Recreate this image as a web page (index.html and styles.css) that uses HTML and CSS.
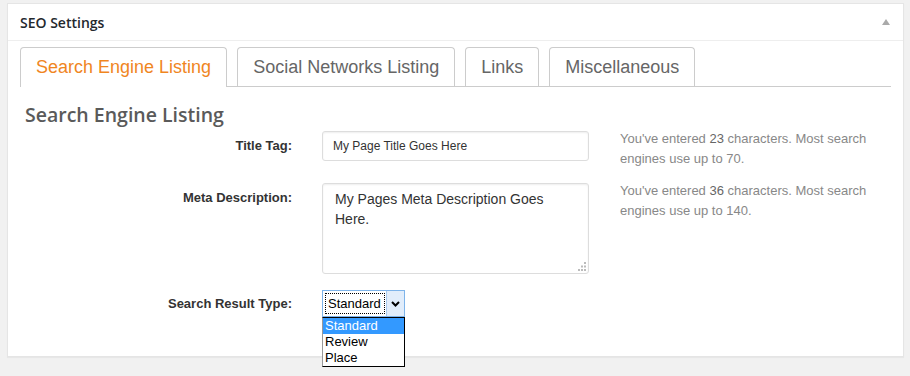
FILE: index.html
```html
<html lang="en">
<head>
  <meta charset="UTF-8">
  <title>SEO Settings</title>
  <link rel="stylesheet" href="styles.css">
</head>
<body>

  <div class="postbox">
    <div class="postbox-header">
      <h2>SEO Settings</h2>
      <span class="toggle"></span>
    </div>

    <div class="inside">
      <!-- Abas -->
      <div class="tabs">
        <div class="tab active">Search Engine Listing</div>
        <div class="tab">Social Networks Listing</div>
        <div class="tab">Links</div>
        <div class="tab">Miscellaneous</div>
      </div>

      <div class="panel">
        <h3>Search Engine Listing</h3>

        <div class="row row-title">
          <label class="label">Title Tag:</label>
          <div class="field">
            <input class="text-input" type="text" value="My Page Title Goes Here">
          </div>
          <p class="help">You've entered <b>23</b> characters. Most search engines use up to 70.</p>
        </div>

        <div class="row row-desc">
          <label class="label">Meta Description:</label>
          <div class="field textarea-wrap">
            <textarea class="text-area">My Pages Meta Description Goes Here.</textarea>
            <svg class="grip" width="10" height="10" viewBox="0 0 10 10">
              <rect x="7" y="0" width="2" height="2" fill="#bbb"/>
              <rect x="4" y="3.5" width="2" height="2" fill="#bbb"/>
              <rect x="7" y="3.5" width="2" height="2" fill="#bbb"/>
              <rect x="1" y="7" width="2" height="2" fill="#bbb"/>
              <rect x="4" y="7" width="2" height="2" fill="#bbb"/>
              <rect x="7" y="7" width="2" height="2" fill="#bbb"/>
            </svg>
          </div>
          <p class="help">You've entered <b>36</b> characters. Most search engines use up to 140.</p>
        </div>

        <div class="row row-type">
          <label class="label">Search Result Type:</label>
          <div class="field">
            <div class="select">
              <div class="select-value"><span>Standard</span></div>
              <div class="select-arrow">
                <svg width="9" height="6" viewBox="0 0 9 6">
                  <path d="M1 1 L4.5 4.5 L8 1" fill="none" stroke="#000" stroke-width="2"/>
                </svg>
              </div>
              <!-- lista aberta -->
              <ul class="select-list">
                <li class="selected">Standard</li>
                <li>Review</li>
                <li>Place</li>
              </ul>
            </div>
          </div>
        </div>
      </div>
    </div>
  </div>

</body>
</html>
```

FILE: styles.css
```css
body {
  margin: 0;
  background: #f1f1f1;
  font-family: 'Liberation Sans', Arial, sans-serif;
  color: #444;
}

.postbox {
  margin: 3px 0 0 7px;
  width: 895px;
  height: 352px;
  background: #fff;
  border: 1px solid #e5e5e5;
  box-shadow: 0 1px 1px rgba(0, 0, 0, 0.04);
}

.postbox-header {
  height: 36px;
  border-bottom: 1px solid #eee;
  display: flex;
  align-items: center;
  justify-content: space-between;
  padding: 0 13px 0 12px;
}

.postbox-header h2 {
  margin: 0;
  font-family: 'Open Sans', sans-serif;
  font-size: 14px;
  font-weight: 600;
  color: #23282d;
}

.toggle {
  width: 0;
  height: 0;
  border-left: 4px solid transparent;
  border-right: 4px solid transparent;
  border-bottom: 6px solid #aaa;
  margin-top: -1px;
}

.inside {
  padding: 6px 12px 0 12px;
}

/* Abas */
.tabs {
  display: flex;
  border-bottom: 1px solid #ccc;
  height: 39px;
}

.tab {
  height: 38px;
  padding: 0 15px;
  margin-right: 10px;
  border: 1px solid #ccc;
  border-bottom: none;
  border-radius: 4px 4px 0 0;
  font-size: 18px;
  line-height: 38px;
  color: #666;
  background: #fff;
}

.tab.active {
  color: #f0861f;
  height: 39px;
  margin-bottom: -1px;
}

.panel {
  padding: 0 0 0 5px;
}

.panel h3 {
  margin: 16px 0 4px 0;
  font-family: 'Open Sans', sans-serif;
  font-size: 19.5px;
  font-weight: 600;
  color: #5a5a5a;
  line-height: 24px;
}

.row {
  display: flex;
  align-items: flex-start;
}

.row-desc {
  margin-top: 14px;
}

.row-type {
  margin-top: 16px;
}

.label {
  width: 267px;
  text-align: right;
  padding-top: 6px;
  font-family: 'Liberation Sans', Arial, sans-serif;
  font-size: 13px;
  font-weight: bold;
  line-height: 18px;
  color: #333;
}

.row-type .label {
  padding-top: 5px;
}

.field {
  margin-left: 30px;
  width: 267px;
}

.text-input {
  box-sizing: border-box;
  width: 267px;
  height: 30px;
  border: 1px solid #ddd;
  border-radius: 3px;
  box-shadow: inset 0 1px 2px rgba(0, 0, 0, 0.07);
  padding: 0 10px;
  font-family: 'Liberation Sans', Arial, sans-serif;
  font-size: 12px;
  color: #333;
}

.textarea-wrap {
  position: relative;
  height: 91px;
}

.text-area {
  box-sizing: border-box;
  width: 267px;
  height: 91px;
  border: 1px solid #ddd;
  border-radius: 3px;
  box-shadow: inset 0 1px 2px rgba(0, 0, 0, 0.07);
  padding: 5px 12px;
  font-family: 'Liberation Sans', Arial, sans-serif;
  font-size: 14px;
  line-height: 20px;
  color: #333;
  resize: none;
  display: block;
}

.grip {
  position: absolute;
  right: 2px;
  bottom: 2px;
}

.help {
  margin: -2px 0 0 31px;
  width: 262px;
  font-size: 13px;
  line-height: 20px;
  color: #888;
}

.help b {
  font-weight: normal;
  color: #666;
}

/* Select aberto */
.select {
  position: relative;
  box-sizing: border-box;
  width: 83px;
  height: 27px;
  border: 1px solid #7eb4ea;
  display: flex;
  background: #fff;
  font-family: 'Liberation Sans', Arial, sans-serif;
  font-size: 13px;
  color: #000;
}

.select-value {
  flex: 1;
  padding: 2px 1px 2px 2px;
}

.select-value span {
  display: block;
  height: 19px;
  border: 1px dotted #000;
  line-height: 19px;
  padding-left: 2px;
}

.select-arrow {
  width: 17px;
  background: #e1edfb;
  border-left: 1px solid #a9cbee;
  display: flex;
  align-items: center;
  justify-content: center;
}

.select-list {
  position: absolute;
  top: 26px;
  left: -1px;
  width: 83px;
  box-sizing: border-box;
  margin: 0;
  padding: 0;
  list-style: none;
  background: #fff;
  border: 1px solid #000;
  border-left-color: #999;
}

.select-list li {
  height: 16px;
  line-height: 16px;
  padding-left: 2px;
  font-size: 13px;
}

.select-list li.selected {
  background: #3399ff;
  color: #fff;
}
```
